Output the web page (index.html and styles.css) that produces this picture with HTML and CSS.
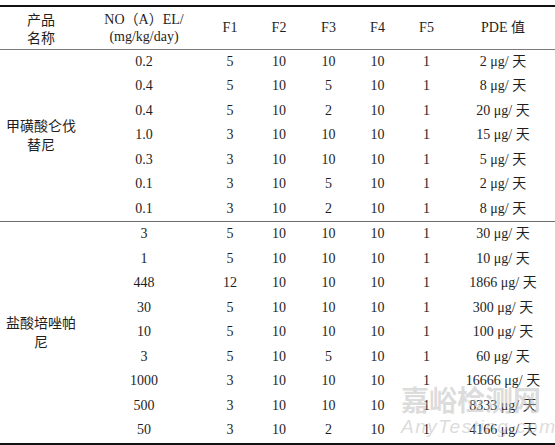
FILE: index.html
```html
<!DOCTYPE html>
<html lang="zh">
<head>
<meta charset="utf-8">
<title>PDE</title>
<link rel="stylesheet" href="styles.css">
</head>
<body>
<div class="page">
<table class="data">
  <colgroup>
    <col class="c-name"><col class="c-noel"><col class="c-f1"><col class="c-f2"><col class="c-f3"><col class="c-f4"><col class="c-f5"><col class="c-pde">
  </colgroup>
  <thead>
    <tr><th>产品<br>名称</th><th>NO（A）EL/<br>(mg/kg/day)</th><th>F1</th><th>F2</th><th>F3</th><th>F4</th><th>F5</th><th>PDE 值</th></tr>
  </thead>
  <tbody class="grp">
    <tr><td rowspan="7" class="name">甲磺酸仑伐<br>替尼</td><td>0.2</td><td>5</td><td>10</td><td>10</td><td>10</td><td>1</td><td>2 μg/ 天</td></tr>
    <tr><td>0.4</td><td>5</td><td>10</td><td>5</td><td>10</td><td>1</td><td>8 μg/ 天</td></tr>
    <tr><td>0.4</td><td>5</td><td>10</td><td>2</td><td>10</td><td>1</td><td>20 μg/ 天</td></tr>
    <tr><td>1.0</td><td>3</td><td>10</td><td>10</td><td>10</td><td>1</td><td>15 μg/ 天</td></tr>
    <tr><td>0.3</td><td>3</td><td>10</td><td>10</td><td>10</td><td>1</td><td>5 μg/ 天</td></tr>
    <tr><td>0.1</td><td>3</td><td>10</td><td>5</td><td>10</td><td>1</td><td>2 μg/ 天</td></tr>
    <tr><td>0.1</td><td>3</td><td>10</td><td>2</td><td>10</td><td>1</td><td>8 μg/ 天</td></tr>
  </tbody>
  <tbody class="grp last">
    <tr><td rowspan="9" class="name">盐酸培唑帕<br>尼</td><td>3</td><td>5</td><td>10</td><td>10</td><td>10</td><td>1</td><td>30 μg/ 天</td></tr>
    <tr><td>1</td><td>5</td><td>10</td><td>10</td><td>10</td><td>1</td><td>10 μg/ 天</td></tr>
    <tr><td>448</td><td>12</td><td>10</td><td>10</td><td>10</td><td>1</td><td>1866 μg/ 天</td></tr>
    <tr><td>30</td><td>5</td><td>10</td><td>10</td><td>10</td><td>1</td><td>300 μg/ 天</td></tr>
    <tr><td>10</td><td>5</td><td>10</td><td>10</td><td>10</td><td>1</td><td>100 μg/ 天</td></tr>
    <tr><td>3</td><td>5</td><td>10</td><td>5</td><td>10</td><td>1</td><td>60 μg/ 天</td></tr>
    <tr><td>1000</td><td>3</td><td>10</td><td>10</td><td>10</td><td>1</td><td>16666 μg/ 天</td></tr>
    <tr><td>500</td><td>3</td><td>10</td><td>10</td><td>10</td><td>1</td><td>8333 μg/ 天</td></tr>
    <tr><td>50</td><td>3</td><td>10</td><td>2</td><td>10</td><td>1</td><td>4166 μg/ 天</td></tr>
  </tbody>
</table>
<div class="watermark">
  <div class="wm-cn">嘉峪检测网</div>
  <div class="wm-en">AnyTesting.com</div>
</div>
</div>
</body>
</html>
```

FILE: styles.css
```css
html, body {
  margin: 0;
  padding: 0;
  background: #ffffff;
}
.page {
  position: relative;
  width: 555px;
  height: 445px;
  padding-top: 5px;
  box-sizing: border-box;
  overflow: hidden;
}
.data {
  width: 555px;
  table-layout: fixed;
  border-collapse: collapse;
  font-family: "Liberation Serif", "Noto Sans CJK SC", serif;
  font-size: 14px;
  color: #1e1e1e;
}
.c-name { width: 82px; }
.c-noel { width: 124px; }
.c-f1 { width: 48px; }
.c-f2 { width: 50px; }
.c-f3 { width: 49px; }
.c-f4 { width: 49px; }
.c-f5 { width: 49px; }
.c-pde { width: 104px; }
.data th, .data td {
  padding: 0;
  text-align: center;
  vertical-align: middle;
  white-space: nowrap;
}
.data thead tr {
  height: 43px;
  border-top: 2px solid #111;
  border-bottom: 1px solid #7a7a7a;
}
.data th {
  font-weight: normal;
  line-height: 17px;
}
.data td {
  height: 24.5px;
  line-height: 16px;
}
.data td.name {
  font-family: "Noto Sans CJK SC", sans-serif;
  font-size: 14px;
  line-height: 19px;
}
.data th:first-child {
  font-family: "Noto Sans CJK SC", sans-serif;
  line-height: 18px;
}
.grp {
  border-bottom: 1px solid #6b6b6b;
}
.grp.last {
  border-bottom: 2px solid #111;
}
.watermark {
  position: absolute;
  left: 401px;
  top: 381px;
  color: rgba(190, 190, 190, 0.55);
  pointer-events: none;
}
.wm-cn {
  font-family: "Noto Sans CJK SC", sans-serif;
  font-weight: bold;
  font-size: 28px;
  line-height: 36px;
  letter-spacing: 0;
}
.wm-en {
  font-family: "Liberation Sans", sans-serif;
  font-style: italic;
  font-size: 19px;
  line-height: 20px;
  letter-spacing: 1.5px;
  margin-top: 0;
}
```
